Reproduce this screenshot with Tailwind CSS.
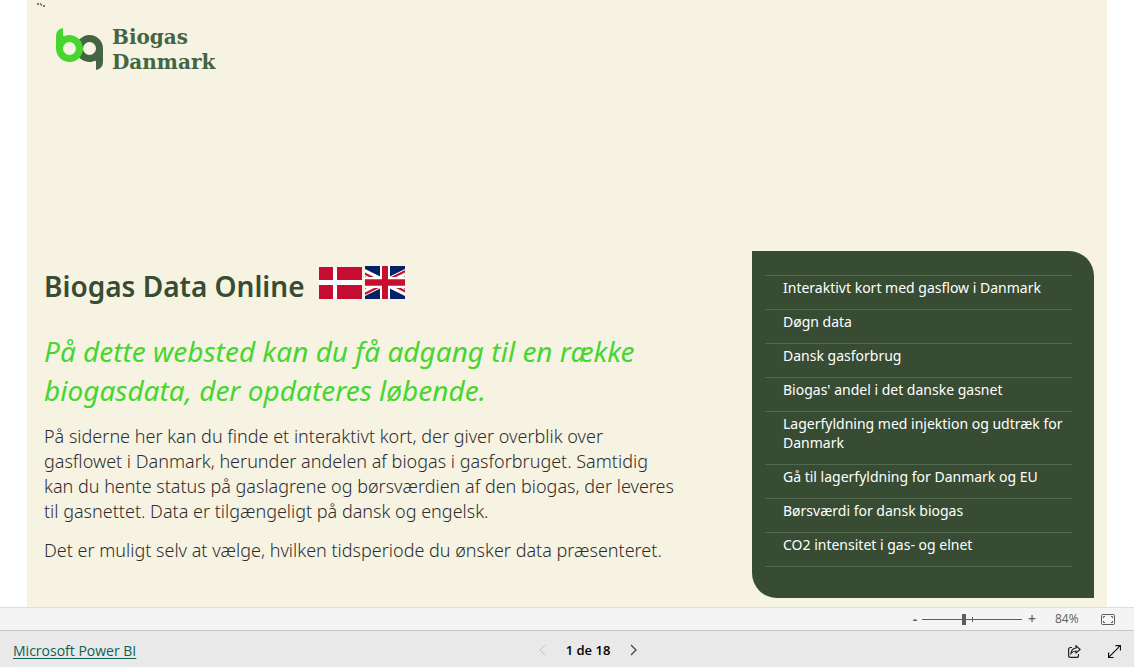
<!DOCTYPE html>
<html lang="da">
<head>
<meta charset="utf-8">
<meta name="viewport" content="width=device-width, initial-scale=1">
<title>Biogas Data Online</title>
<script src="https://cdn.jsdelivr.net/npm/@tailwindcss/browser@4"></script>
</head>
<body class="flex h-screen flex-col overflow-hidden bg-white font-['Noto_Sans',sans-serif]">
<main class="relative mx-[27px] flex min-h-0 flex-1 flex-col bg-[#f7f3e3]">
  <svg class="absolute left-[9px] top-[2px]" width="10" height="6" viewBox="0 0 10 6" fill="#777" aria-hidden="true"><path d="M1 1h2v2H1zM4 1h1v2H4zM5 2h1v2H5zM7 3h2v2H7z"/></svg>
  <header class="flex items-start gap-2 pl-[29px] pt-[25px] text-[#446544]">
    <svg class="mt-[3px]" width="48" height="42" viewBox="0 0 48 42" aria-hidden="true">
      <path fill="#446544" fill-rule="evenodd" d="M33.500 7A13.500 13.500 0 1 0 37 33.500Q40 32 40 34V42Q47 40.500 47 34V20.500A13.500 13.500 0 0 0 33.500 7ZM33.500 14a6.500 6.500 0 1 1 0 13a6.500 6.500 0 0 1 0-13Z"/>
      <path fill="#46d62f" fill-rule="evenodd" d="M7 0Q0 1.500 0 8V20.500A13.500 13.500 0 1 0 10 7.500Q7 9 7 7ZM13.500 14a6.500 6.500 0 1 1 0 13a6.500 6.500 0 0 1 0-13Z"/>
    </svg>
    <p class="font-['DejaVu_Serif',serif] text-[20px] font-bold leading-[25px]">Biogas<br>Danmark</p>
  </header>
  <div class="mt-auto flex items-start justify-between pb-[9px] pl-[17px] pr-[13px]">
    <section class="pt-[14px] text-[#2d2d2d]">
      <div class="flex items-start gap-[14px]">
        <h1 class="whitespace-nowrap text-[28px] font-semibold leading-[42px] text-[#384c33]">Biogas Data Online</h1>
        <div class="flex gap-[3px] pt-px">
          <button aria-label="Dansk" class="mt-px block"><svg width="43" height="32" viewBox="0 0 43 32"><path fill="#c60c30" d="M0 0h43v32H0z"/><path fill="#fff" d="M14 0h4v32h-4zM0 13h43v5H0z"/></svg></button>
          <button aria-label="English" class="block"><svg width="40" height="33" viewBox="12 0 36 30" preserveAspectRatio="none"><path fill="#012169" d="M0 0h60v30H0z"/><path stroke="#fff" stroke-width="6" d="M0 0 60 30M60 0 0 30"/><path fill="#c8102e" d="M0 0 30 15h-4.500L0 2.300ZM60 0 30 15h-4.500L55.500 0ZM60 30 30 15h4.500L60 27.700ZM0 30 30 15h4.500L4.500 30Z"/><path fill="#fff" d="M25.500 0h9v30h-9zM12 10h36v10H12z"/><path fill="#c8102e" d="M27.300 0h5.400v30h-5.400zM12 12h36v6H12z"/></svg></button>
        </div>
      </div>
      <p class="mt-[25px] whitespace-nowrap text-[28px] italic leading-[39px] text-[#46d62f]">På dette websted kan du få adgang til en række<br>biogasdata, der opdateres løbende.</p>
      <p class="mt-[14px] whitespace-nowrap text-[18px] font-light leading-[25px]">På siderne her kan du finde et interaktivt kort, der giver overblik over<br>gasflowet i Danmark, herunder andelen af biogas i gasforbruget. Samtidig<br>kan du hente status på gaslagrene og børsværdien af den biogas, der leveres<br>til gasnettet. Data er tilgængeligt på dansk og engelsk.</p>
      <p class="mt-[14px] whitespace-nowrap text-[18px] font-light leading-[25px]">Det er muligt selv at vælge, hvilken tidsperiode du ønsker data præsenteret.</p>
    </section>
    <nav aria-label="Sider" class="w-[342px] shrink-0 rounded-bl-[25px] rounded-tr-[25px] bg-[#384c33] pb-[31px] pl-[13px] pr-[22px] pt-6 text-[14px] leading-[19px] text-white">
      <ul class="whitespace-nowrap border-b border-[#52694f] [&_a]:block [&_li]:border-t [&_li]:border-[#52694f] [&_li]:pb-[12px] [&_li]:pl-[18px] [&_li]:pt-[2px]">
        <li><a href="#">Interaktivt kort med gasflow i Danmark</a></li>
        <li><a href="#">Døgn data</a></li>
        <li><a href="#">Dansk gasforbrug</a></li>
        <li><a href="#">Biogas' andel i det danske gasnet</a></li>
        <li><a href="#">Lagerfyldning med injektion og udtræk for<br>Danmark</a></li>
        <li><a href="#">Gå til lagerfyldning for Danmark og EU</a></li>
        <li><a href="#">Børsværdi for dansk biogas</a></li>
        <li><a href="#">CO2 intensitet i gas- og elnet</a></li>
      </ul>
    </nav>
  </div>
</main>
<div class="flex h-6 shrink-0 items-center justify-end border-y border-t-[#dedede] border-b-[#c8c8c8] bg-[#f4f4f4] pr-[19px] text-[#605e5c]">
  <button aria-label="Zoom ud" class="w-[14px] text-[14px] font-semibold leading-5">-</button>
  <div class="relative flex h-5 w-[100px] items-center">
    <input aria-label="Zoom" type="range" min="0" max="100" value="42" class="h-px w-full appearance-none bg-[#605e5c] [&::-webkit-slider-thumb]:h-[11px] [&::-webkit-slider-thumb]:w-1 [&::-webkit-slider-thumb]:appearance-none [&::-webkit-slider-thumb]:bg-[#605e5c]">
    <span class="absolute left-[50px] top-[8px] h-[5px] w-px bg-[#605e5c]"></span>
  </div>
  <button aria-label="Zoom ind" class="w-5 text-[14px] font-medium leading-5">+</button>
  <span class="ml-[13px] w-[28px] font-['Open_Sans',sans-serif] text-[12px] leading-5">84%</span>
  <button aria-label="Tilpas til side" class="ml-[18px]"><svg width="14" height="11" viewBox="0 0 14 11" fill="none" stroke="#605e5c"><rect x=".5" y=".5" width="13" height="10" rx="1"/><path d="M2.500 4V2.500H4M10 2.500h1.500V4M11.500 7v1.500H10M4 8.500H2.500V7"/></svg></button>
</div>
<footer class="grid h-9 shrink-0 grid-cols-3 items-center bg-[#e9e9e9] px-[13px] pt-1 font-['Open_Sans',sans-serif]">
  <a href="#" class="justify-self-start text-[14px] leading-5 text-[#0b6158] underline underline-offset-2">Microsoft Power BI</a>
  <div class="flex items-center justify-center gap-5 pb-[2px] pl-[42px]">
    <button disabled aria-label="Forrige side"><svg width="7" height="12" viewBox="0 0 7 12" fill="none" stroke="#c2c2c2"><path d="M6 1 1 6l5 5"/></svg></button>
    <span class="text-[13px] font-semibold leading-5 text-black">1 de 18</span>
    <button aria-label="Næste side"><svg width="7" height="12" viewBox="0 0 7 12" fill="none" stroke="#444" stroke-width="1.300"><path d="m1 1 5 5-5 5"/></svg></button>
  </div>
  <div class="flex items-center justify-end gap-[27px]">
    <button aria-label="Del"><svg class="block" width="13" height="13" viewBox="0 0 13 13" fill="none" stroke="#222" stroke-width="1.200"><path d="M4 2.500H2.500Q.6 2.500.6 4.500v6q0 1.900 1.900 1.900h6q2 0 2-2V9M8 .8 12.200 4.500 8 8V6Q5 6 3 8.500 3.500 3.500 8 3Z"/></svg></button>
    <button aria-label="Fuld skærm"><svg class="block" width="13" height="13" viewBox="0 0 13 13" fill="none" stroke="#111" stroke-width="1.200"><path d="M7.500.6h5v5M12.400.6.6 12.400M.6 7.500v5h5"/></svg></button>
  </div>
</footer>
</body>
</html>
